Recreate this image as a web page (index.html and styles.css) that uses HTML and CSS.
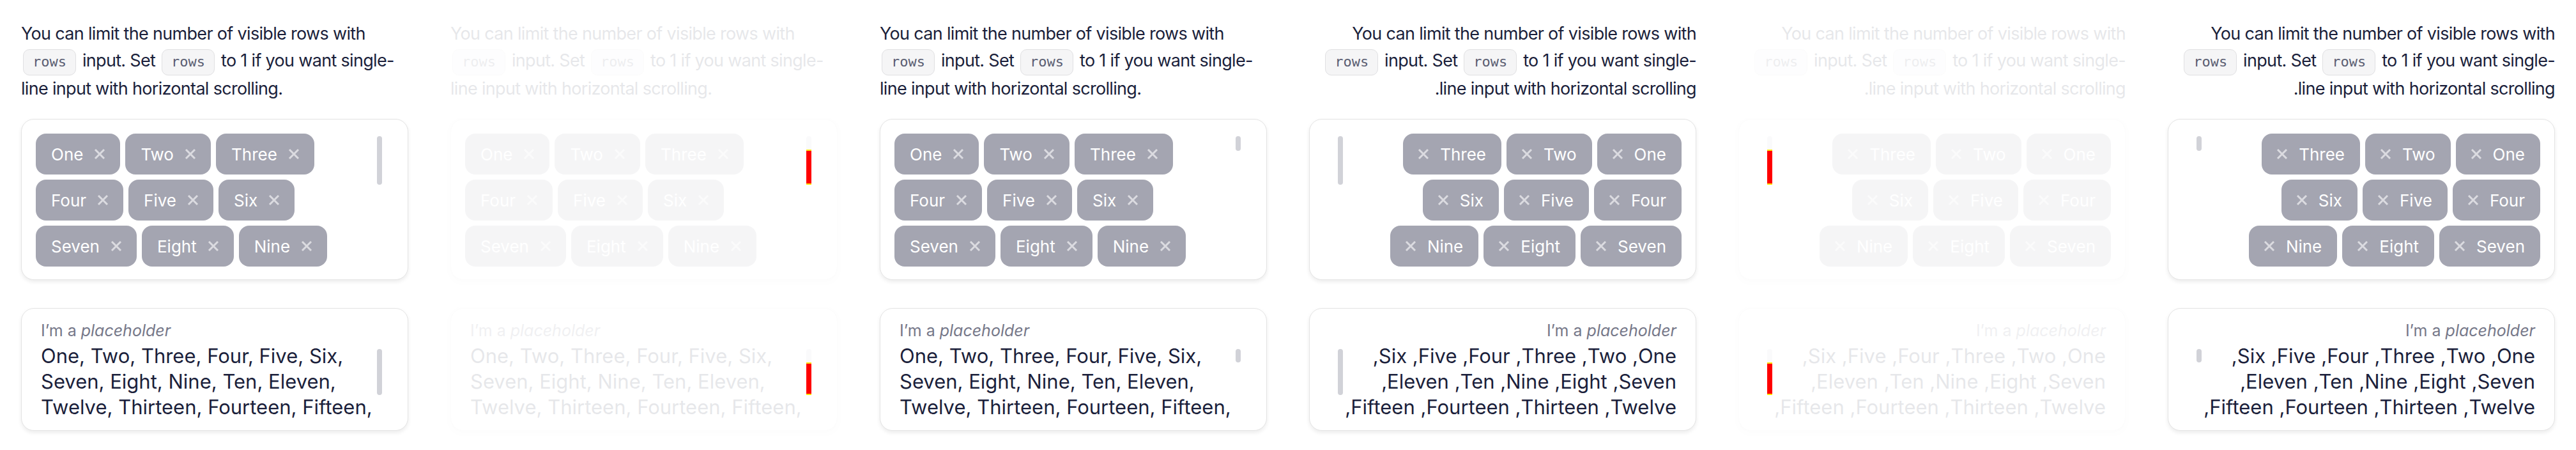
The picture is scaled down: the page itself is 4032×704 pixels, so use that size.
FILE: index.html
```html
<!DOCTYPE html>
<html lang="en">
<head>
<meta charset="utf-8">
<title>Input tag rows</title>
<link rel="stylesheet" href="styles.css">
</head>
<body>
<div class="page">

  <section class="panel">
    <p class="desc">You can limit the number of visible rows with <code class="code">rows</code> input. Set <code class="code">rows</code> to 1 if you want single-line input with horizontal scrolling.</p>
    <div class="field">
      <div class="box tags-box">
        <div class="tags">
          <span class="tag"><span>One</span><svg class="x" viewBox="0 0 20 20"><path d="M3 3L17 17M17 3L3 17"/></svg></span>
          <span class="tag"><span>Two</span><svg class="x" viewBox="0 0 20 20"><path d="M3 3L17 17M17 3L3 17"/></svg></span>
          <span class="tag"><span>Three</span><svg class="x" viewBox="0 0 20 20"><path d="M3 3L17 17M17 3L3 17"/></svg></span>
          <span class="tag"><span>Four</span><svg class="x" viewBox="0 0 20 20"><path d="M3 3L17 17M17 3L3 17"/></svg></span>
          <span class="tag"><span>Five</span><svg class="x" viewBox="0 0 20 20"><path d="M3 3L17 17M17 3L3 17"/></svg></span>
          <span class="tag"><span>Six</span><svg class="x" viewBox="0 0 20 20"><path d="M3 3L17 17M17 3L3 17"/></svg></span>
          <span class="tag"><span>Seven</span><svg class="x" viewBox="0 0 20 20"><path d="M3 3L17 17M17 3L3 17"/></svg></span>
          <span class="tag"><span>Eight</span><svg class="x" viewBox="0 0 20 20"><path d="M3 3L17 17M17 3L3 17"/></svg></span>
          <span class="tag"><span>Nine</span><svg class="x" viewBox="0 0 20 20"><path d="M3 3L17 17M17 3L3 17"/></svg></span>
        </div>
      </div>
      <span class="thumb thumb-tags"></span>
    </div>
    <div class="field">
      <div class="box area-box">
        <div class="label">I’m a <i>placeholder</i></div>
        <div class="area-text"><span>One,</span> <span>Two,</span> <span>Three,</span> <span>Four,</span> <span>Five,</span> <span>Six,</span> <span>Seven,</span> <span>Eight,</span> <span>Nine,</span> <span>Ten,</span> <span>Eleven,</span> <span>Twelve,</span> <span>Thirteen,</span> <span>Fourteen,</span> <span>Fifteen,</span></div>
      </div>
      <span class="thumb thumb-area"></span>
    </div>
  </section>

  <section class="panel diff">
    <p class="desc">You can limit the number of visible rows with <code class="code">rows</code> input. Set <code class="code">rows</code> to 1 if you want single-line input with horizontal scrolling.</p>
    <div class="field">
      <div class="box tags-box">
        <div class="tags">
          <span class="tag"><span>One</span><svg class="x" viewBox="0 0 20 20"><path d="M3 3L17 17M17 3L3 17"/></svg></span>
          <span class="tag"><span>Two</span><svg class="x" viewBox="0 0 20 20"><path d="M3 3L17 17M17 3L3 17"/></svg></span>
          <span class="tag"><span>Three</span><svg class="x" viewBox="0 0 20 20"><path d="M3 3L17 17M17 3L3 17"/></svg></span>
          <span class="tag"><span>Four</span><svg class="x" viewBox="0 0 20 20"><path d="M3 3L17 17M17 3L3 17"/></svg></span>
          <span class="tag"><span>Five</span><svg class="x" viewBox="0 0 20 20"><path d="M3 3L17 17M17 3L3 17"/></svg></span>
          <span class="tag"><span>Six</span><svg class="x" viewBox="0 0 20 20"><path d="M3 3L17 17M17 3L3 17"/></svg></span>
          <span class="tag"><span>Seven</span><svg class="x" viewBox="0 0 20 20"><path d="M3 3L17 17M17 3L3 17"/></svg></span>
          <span class="tag"><span>Eight</span><svg class="x" viewBox="0 0 20 20"><path d="M3 3L17 17M17 3L3 17"/></svg></span>
          <span class="tag"><span>Nine</span><svg class="x" viewBox="0 0 20 20"><path d="M3 3L17 17M17 3L3 17"/></svg></span>
        </div>
      </div>
      <span class="thumb thumb-tags"></span>
    </div>
    <div class="field">
      <div class="box area-box">
        <div class="label">I’m a <i>placeholder</i></div>
        <div class="area-text"><span>One,</span> <span>Two,</span> <span>Three,</span> <span>Four,</span> <span>Five,</span> <span>Six,</span> <span>Seven,</span> <span>Eight,</span> <span>Nine,</span> <span>Ten,</span> <span>Eleven,</span> <span>Twelve,</span> <span>Thirteen,</span> <span>Fourteen,</span> <span>Fifteen,</span></div>
      </div>
      <span class="thumb thumb-area"></span>
    </div>
  </section>

  <section class="panel short">
    <p class="desc">You can limit the number of visible rows with <code class="code">rows</code> input. Set <code class="code">rows</code> to 1 if you want single-line input with horizontal scrolling.</p>
    <div class="field">
      <div class="box tags-box">
        <div class="tags">
          <span class="tag"><span>One</span><svg class="x" viewBox="0 0 20 20"><path d="M3 3L17 17M17 3L3 17"/></svg></span>
          <span class="tag"><span>Two</span><svg class="x" viewBox="0 0 20 20"><path d="M3 3L17 17M17 3L3 17"/></svg></span>
          <span class="tag"><span>Three</span><svg class="x" viewBox="0 0 20 20"><path d="M3 3L17 17M17 3L3 17"/></svg></span>
          <span class="tag"><span>Four</span><svg class="x" viewBox="0 0 20 20"><path d="M3 3L17 17M17 3L3 17"/></svg></span>
          <span class="tag"><span>Five</span><svg class="x" viewBox="0 0 20 20"><path d="M3 3L17 17M17 3L3 17"/></svg></span>
          <span class="tag"><span>Six</span><svg class="x" viewBox="0 0 20 20"><path d="M3 3L17 17M17 3L3 17"/></svg></span>
          <span class="tag"><span>Seven</span><svg class="x" viewBox="0 0 20 20"><path d="M3 3L17 17M17 3L3 17"/></svg></span>
          <span class="tag"><span>Eight</span><svg class="x" viewBox="0 0 20 20"><path d="M3 3L17 17M17 3L3 17"/></svg></span>
          <span class="tag"><span>Nine</span><svg class="x" viewBox="0 0 20 20"><path d="M3 3L17 17M17 3L3 17"/></svg></span>
        </div>
      </div>
      <span class="thumb thumb-tags"></span>
    </div>
    <div class="field">
      <div class="box area-box">
        <div class="label">I’m a <i>placeholder</i></div>
        <div class="area-text"><span>One,</span> <span>Two,</span> <span>Three,</span> <span>Four,</span> <span>Five,</span> <span>Six,</span> <span>Seven,</span> <span>Eight,</span> <span>Nine,</span> <span>Ten,</span> <span>Eleven,</span> <span>Twelve,</span> <span>Thirteen,</span> <span>Fourteen,</span> <span>Fifteen,</span></div>
      </div>
      <span class="thumb thumb-area"></span>
    </div>
  </section>

  <section class="panel rtl" dir="rtl">
    <p class="desc">You can limit the number of visible rows with <code class="code">rows</code> input. Set <code class="code">rows</code> to 1 if you want single-line input with horizontal scrolling.</p>
    <div class="field">
      <div class="box tags-box">
        <div class="tags">
          <span class="tag"><span>One</span><svg class="x" viewBox="0 0 20 20"><path d="M3 3L17 17M17 3L3 17"/></svg></span>
          <span class="tag"><span>Two</span><svg class="x" viewBox="0 0 20 20"><path d="M3 3L17 17M17 3L3 17"/></svg></span>
          <span class="tag"><span>Three</span><svg class="x" viewBox="0 0 20 20"><path d="M3 3L17 17M17 3L3 17"/></svg></span>
          <span class="tag"><span>Four</span><svg class="x" viewBox="0 0 20 20"><path d="M3 3L17 17M17 3L3 17"/></svg></span>
          <span class="tag"><span>Five</span><svg class="x" viewBox="0 0 20 20"><path d="M3 3L17 17M17 3L3 17"/></svg></span>
          <span class="tag"><span>Six</span><svg class="x" viewBox="0 0 20 20"><path d="M3 3L17 17M17 3L3 17"/></svg></span>
          <span class="tag"><span>Seven</span><svg class="x" viewBox="0 0 20 20"><path d="M3 3L17 17M17 3L3 17"/></svg></span>
          <span class="tag"><span>Eight</span><svg class="x" viewBox="0 0 20 20"><path d="M3 3L17 17M17 3L3 17"/></svg></span>
          <span class="tag"><span>Nine</span><svg class="x" viewBox="0 0 20 20"><path d="M3 3L17 17M17 3L3 17"/></svg></span>
        </div>
      </div>
      <span class="thumb thumb-tags"></span>
    </div>
    <div class="field">
      <div class="box area-box">
        <div class="label">I’m a <i>placeholder</i></div>
        <div class="area-text"><span>One,</span> <span>Two,</span> <span>Three,</span> <span>Four,</span> <span>Five,</span> <span>Six,</span> <span>Seven,</span> <span>Eight,</span> <span>Nine,</span> <span>Ten,</span> <span>Eleven,</span> <span>Twelve,</span> <span>Thirteen,</span> <span>Fourteen,</span> <span>Fifteen,</span></div>
      </div>
      <span class="thumb thumb-area"></span>
    </div>
  </section>

  <section class="panel rtl diff" dir="rtl">
    <p class="desc">You can limit the number of visible rows with <code class="code">rows</code> input. Set <code class="code">rows</code> to 1 if you want single-line input with horizontal scrolling.</p>
    <div class="field">
      <div class="box tags-box">
        <div class="tags">
          <span class="tag"><span>One</span><svg class="x" viewBox="0 0 20 20"><path d="M3 3L17 17M17 3L3 17"/></svg></span>
          <span class="tag"><span>Two</span><svg class="x" viewBox="0 0 20 20"><path d="M3 3L17 17M17 3L3 17"/></svg></span>
          <span class="tag"><span>Three</span><svg class="x" viewBox="0 0 20 20"><path d="M3 3L17 17M17 3L3 17"/></svg></span>
          <span class="tag"><span>Four</span><svg class="x" viewBox="0 0 20 20"><path d="M3 3L17 17M17 3L3 17"/></svg></span>
          <span class="tag"><span>Five</span><svg class="x" viewBox="0 0 20 20"><path d="M3 3L17 17M17 3L3 17"/></svg></span>
          <span class="tag"><span>Six</span><svg class="x" viewBox="0 0 20 20"><path d="M3 3L17 17M17 3L3 17"/></svg></span>
          <span class="tag"><span>Seven</span><svg class="x" viewBox="0 0 20 20"><path d="M3 3L17 17M17 3L3 17"/></svg></span>
          <span class="tag"><span>Eight</span><svg class="x" viewBox="0 0 20 20"><path d="M3 3L17 17M17 3L3 17"/></svg></span>
          <span class="tag"><span>Nine</span><svg class="x" viewBox="0 0 20 20"><path d="M3 3L17 17M17 3L3 17"/></svg></span>
        </div>
      </div>
      <span class="thumb thumb-tags"></span>
    </div>
    <div class="field">
      <div class="box area-box">
        <div class="label">I’m a <i>placeholder</i></div>
        <div class="area-text"><span>One,</span> <span>Two,</span> <span>Three,</span> <span>Four,</span> <span>Five,</span> <span>Six,</span> <span>Seven,</span> <span>Eight,</span> <span>Nine,</span> <span>Ten,</span> <span>Eleven,</span> <span>Twelve,</span> <span>Thirteen,</span> <span>Fourteen,</span> <span>Fifteen,</span></div>
      </div>
      <span class="thumb thumb-area"></span>
    </div>
  </section>

  <section class="panel rtl short" dir="rtl">
    <p class="desc">You can limit the number of visible rows with <code class="code">rows</code> input. Set <code class="code">rows</code> to 1 if you want single-line input with horizontal scrolling.</p>
    <div class="field">
      <div class="box tags-box">
        <div class="tags">
          <span class="tag"><span>One</span><svg class="x" viewBox="0 0 20 20"><path d="M3 3L17 17M17 3L3 17"/></svg></span>
          <span class="tag"><span>Two</span><svg class="x" viewBox="0 0 20 20"><path d="M3 3L17 17M17 3L3 17"/></svg></span>
          <span class="tag"><span>Three</span><svg class="x" viewBox="0 0 20 20"><path d="M3 3L17 17M17 3L3 17"/></svg></span>
          <span class="tag"><span>Four</span><svg class="x" viewBox="0 0 20 20"><path d="M3 3L17 17M17 3L3 17"/></svg></span>
          <span class="tag"><span>Five</span><svg class="x" viewBox="0 0 20 20"><path d="M3 3L17 17M17 3L3 17"/></svg></span>
          <span class="tag"><span>Six</span><svg class="x" viewBox="0 0 20 20"><path d="M3 3L17 17M17 3L3 17"/></svg></span>
          <span class="tag"><span>Seven</span><svg class="x" viewBox="0 0 20 20"><path d="M3 3L17 17M17 3L3 17"/></svg></span>
          <span class="tag"><span>Eight</span><svg class="x" viewBox="0 0 20 20"><path d="M3 3L17 17M17 3L3 17"/></svg></span>
          <span class="tag"><span>Nine</span><svg class="x" viewBox="0 0 20 20"><path d="M3 3L17 17M17 3L3 17"/></svg></span>
        </div>
      </div>
      <span class="thumb thumb-tags"></span>
    </div>
    <div class="field">
      <div class="box area-box">
        <div class="label">I’m a <i>placeholder</i></div>
        <div class="area-text"><span>One,</span> <span>Two,</span> <span>Three,</span> <span>Four,</span> <span>Five,</span> <span>Six,</span> <span>Seven,</span> <span>Eight,</span> <span>Nine,</span> <span>Ten,</span> <span>Eleven,</span> <span>Twelve,</span> <span>Thirteen,</span> <span>Fourteen,</span> <span>Fifteen,</span></div>
      </div>
      <span class="thumb thumb-area"></span>
    </div>
  </section>

</div>
</body>
</html>
```

FILE: styles.css
```css
* {
  box-sizing: border-box;
}

html,
body {
  margin: 0;
  background: #ffffff;
}

body {
  font-family: Inter, "Noto Sans", sans-serif;
  color: #1b1f3b;
}

.page {
  display: flex;
  width: 4032px;
  height: 704px;
  overflow: hidden;
}

.panel {
  flex: 0 0 672px;
  padding: 32px 33px 0;
}

.desc {
  margin: 0 0 26px;
  font-size: 27px;
  line-height: 42px;
  letter-spacing: -0.68px;
}

.code {
  display: inline-block;
  margin: 0 3px;
  padding: 6px 14px 7px;
  border: 1px solid #e0e0e2;
  border-radius: 10px;
  background: #f5f5f6;
  font-family: "DejaVu Sans Mono", "Liberation Mono", monospace;
  font-size: 22px;
  line-height: 26px;
  letter-spacing: 0;
  color: #5b5e72;
}

.field {
  position: relative;
}

.field + .field {
  margin-top: 44px;
}

.box {
  border: 1px solid #e4e4e4;
  border-radius: 20px;
  background: #ffffff;
  box-shadow: 0 3px 6px rgba(0, 0, 0, 0.08);
}

.tags-box {
  padding: 22px 22px 20px;
}

.tags {
  display: flex;
  flex-wrap: wrap;
  align-content: flex-start;
  gap: 8px;
  height: 208px;
}

.tag {
  display: flex;
  align-items: center;
  gap: 16px;
  height: 64px;
  padding-inline: 24px 22px;
  border-radius: 16px;
  background: #a4a5b1;
  color: #ffffff;
  font-size: 26px;
}

.x {
  flex: none;
  width: 20px;
  height: 20px;
  fill: none;
  stroke: #dbdbe0;
  stroke-width: 3;
}

.area-box {
  padding: 16px 30px 16px;
}

.label {
  font-size: 25px;
  line-height: 36px;
  color: #767889;
}

.area-text {
  margin-top: 2px;
  font-size: 31px;
  line-height: 40px;
}

.area-text span {
  unicode-bidi: isolate;
}

.thumb {
  position: absolute;
  right: 41px;
  width: 8px;
  border-radius: 4px;
  background: #d1d2d8;
}

.rtl .thumb {
  right: auto;
  left: 45px;
}

.thumb-tags {
  top: 27px;
  height: 76px;
}

.thumb-area {
  top: 64px;
  height: 72px;
}

.short .thumb-tags {
  height: 23px;
}

.short .thumb-area {
  height: 21px;
}

.diff .desc,
.diff .box {
  opacity: 0.1;
}

.diff .thumb {
  border-radius: 4px 4px 0 0;
  background: linear-gradient(#fafafb 0 21px, #ffe600 21px 23px, #ff0000 23px calc(100% - 2px), #ffe600 calc(100% - 2px));
}
```
